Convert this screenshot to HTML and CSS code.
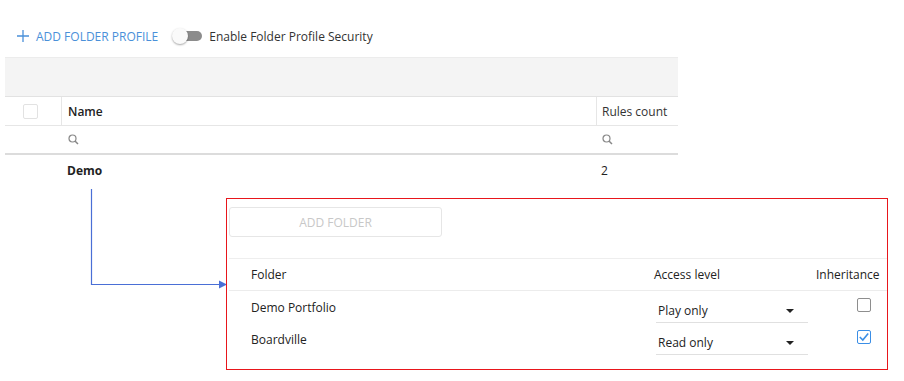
FILE: index.html
```html
<!DOCTYPE html>
<html lang="en">
<head>
  <meta charset="UTF-8">
  <title>Folder Profiles</title>
  <link rel="stylesheet" href="styles.css">
</head>
<body>
  <div class="page">
    <!-- toolbar -->
    <div class="toolbar">
      <a class="add-profile" href="#">
        <svg width="14" height="14" viewBox="0 0 14 14"><path d="M7 1v12M1 7h12" stroke="#4a90d9" stroke-width="1.3" fill="none"/></svg>
        ADD FOLDER PROFILE
      </a>
      <span class="toggle"><span class="knob"></span></span>
      <span class="toggle-label">Enable Folder Profile Security</span>
    </div>

    <!-- profiles grid -->
    <div class="grid">
      <div class="grid-band"></div>
      <div class="row head">
        <div class="cell check"><span class="box"></span></div>
        <div class="cell name">Name</div>
        <div class="cell count">Rules count</div>
      </div>
      <div class="row filter">
        <div class="cell check"></div>
        <div class="cell name"><svg class="search" width="11" height="11" viewBox="0 0 11 11"><circle cx="4.5" cy="4.5" r="3.5" stroke="#888" stroke-width="1.2" fill="none"/><path d="M7 7l3 3" stroke="#888" stroke-width="1.5"/></svg></div>
        <div class="cell count"><svg class="search" width="11" height="11" viewBox="0 0 11 11"><circle cx="4.5" cy="4.5" r="3.5" stroke="#888" stroke-width="1.2" fill="none"/><path d="M7 7l3 3" stroke="#888" stroke-width="1.5"/></svg></div>
      </div>
      <div class="row data">
        <div class="cell check"></div>
        <div class="cell name strong">Demo</div>
        <div class="cell count">2</div>
      </div>
    </div>

    <!-- detail -->
    <div class="detail">
      <div class="connector">
        <svg width="221" height="100" viewBox="0 0 221 100">
          <path d="M86.5 4V99.5H214" stroke="#4a6fd6" stroke-width="1.2" fill="none"/>
          <path d="M214 95.5L222 99.5L214 103.5Z" fill="#4a6fd6"/>
        </svg>
      </div>
      <div class="panel">
        <button class="add-folder" disabled>ADD FOLDER</button>
        <div class="folders">
          <div class="frow fhead">
            <div class="fcell folder">Folder</div>
            <div class="fcell access">Access level</div>
            <div class="fcell inherit">Inheritance</div>
          </div>
          <div class="frow">
            <div class="fcell folder">Demo Portfolio</div>
            <div class="fcell access"><div class="select">Play only<span class="caret"></span></div></div>
            <div class="fcell inherit"><span class="cb"></span></div>
          </div>
          <div class="frow">
            <div class="fcell folder">Boardville</div>
            <div class="fcell access"><div class="select">Read only<span class="caret"></span></div></div>
            <div class="fcell inherit"><span class="cb on"><svg width="12" height="12" viewBox="0 0 12 12"><path d="M1.8 6l3 3 5.4-6.6" stroke="#3a8ee6" stroke-width="1.6" fill="none"/></svg></span></div>
          </div>
        </div>
      </div>
    </div>
  </div>
</body>
</html>
```
FILE: styles.css
```css
body {
  margin: 0;
  font-family: "Open Sans", Arial, sans-serif;
  font-size: 12px;
  color: #222;
  background: #fff;
}
.page {
  padding-left: 5px;
}
.toolbar {
  display: flex;
  align-items: center;
  height: 36px;
  margin-top: 18px;
  padding-left: 11px;
}
.add-profile {
  display: flex;
  align-items: center;
  gap: 6px;
  color: #4a90d9;
  text-decoration: none;
}
.toggle {
  position: relative;
  width: 23px;
  height: 10px;
  margin-left: 21px;
  border-radius: 5px;
  background: #8c8c8c;
}
.toggle .knob {
  position: absolute;
  left: -7px;
  top: -3px;
  width: 16px;
  height: 16px;
  border-radius: 50%;
  background: #fafafa;
  box-shadow: 0 1px 2px rgba(0, 0, 0, 0.35);
}
.toggle-label {
  margin-left: 7px;
  color: #333;
}
.grid {
  width: 673px;
  margin-top: 3px;
}
.grid-band {
  height: 40px;
  box-sizing: border-box;
  background: #f4f4f4;
  border-top: 1px solid #ececec;
  border-bottom: 1px solid #e2e2e2;
}
.row {
  display: flex;
  box-sizing: border-box;
  height: 29px;
  align-items: stretch;
}
.row.head {
  border-bottom: 1px solid #e6e6e6;
}
.row.filter {
  border-bottom: 2px solid #dcdcdc;
}
.row.data {
  height: 30px;
}
.cell {
  display: flex;
  align-items: center;
  padding-left: 6px;
}
.cell.check {
  width: 56px;
  padding-left: 0;
  justify-content: center;
  box-sizing: border-box;
  padding-right: 6px;
}
.cell.name {
  flex: 1;
}
.cell.count {
  width: 82px;
  box-sizing: border-box;
  padding-left: 5px;
}
.row.head .cell.name,
.row.head .cell.count {
  border-left: 1px solid #e6e6e6;
}
.row.head .cell.name {
  font-weight: 600;
}
.row.head .cell.count {
  color: #333;
}
.box {
  width: 13px;
  height: 13px;
  border: 1px solid #e2e2e2;
  border-radius: 2px;
}
.search {
  margin-left: 1px;
}
.strong {
  font-weight: 700;
}
.detail {
  display: flex;
  margin-top: 13px;
}
.connector {
  width: 221px;
  margin-top: -13px;
}
.connector svg {
  overflow: visible;
}
.panel {
  width: 662px;
  height: 172px;
  border: 1px solid #e8161b;
  box-sizing: border-box;
  padding: 8px 0 0 2px;
}
.add-folder {
  display: block;
  width: 213px;
  height: 30px;
  border: 1px solid #e6e6e6;
  border-radius: 3px;
  background: #fff;
  color: #c8c8c8;
  font-family: inherit;
  font-size: 12px;
}
.folders {
  margin-top: 21px;
  border-top: 1px solid #eeeeee;
}
.frow {
  display: flex;
  height: 32px;
  align-items: center;
}
.frow.fhead {
  height: 31px;
  border-bottom: 1px solid #ececec;
}
.fcell.folder {
  flex: 1;
  padding-left: 22px;
}
.fcell.access {
  width: 162px;
}
.fcell.inherit {
  width: 71px;
}
.select {
  position: relative;
  width: 152px;
  margin: 10px 0 0 2px;
  padding: 0 0 3px 2px;
  box-sizing: border-box;
  border-bottom: 1px solid #e0e0e0;
}
.caret {
  position: absolute;
  right: 14px;
  top: 7px;
  border-left: 4px solid transparent;
  border-right: 4px solid transparent;
  border-top: 4px solid #222;
}
.cb {
  display: flex;
  align-items: center;
  justify-content: center;
  width: 12px;
  height: 12px;
  border: 1px solid #8e8e8e;
  border-radius: 2px;
  margin: -4px 0 0 41px;
}
.cb.on {
  border-color: #3a8ee6;
}
```
